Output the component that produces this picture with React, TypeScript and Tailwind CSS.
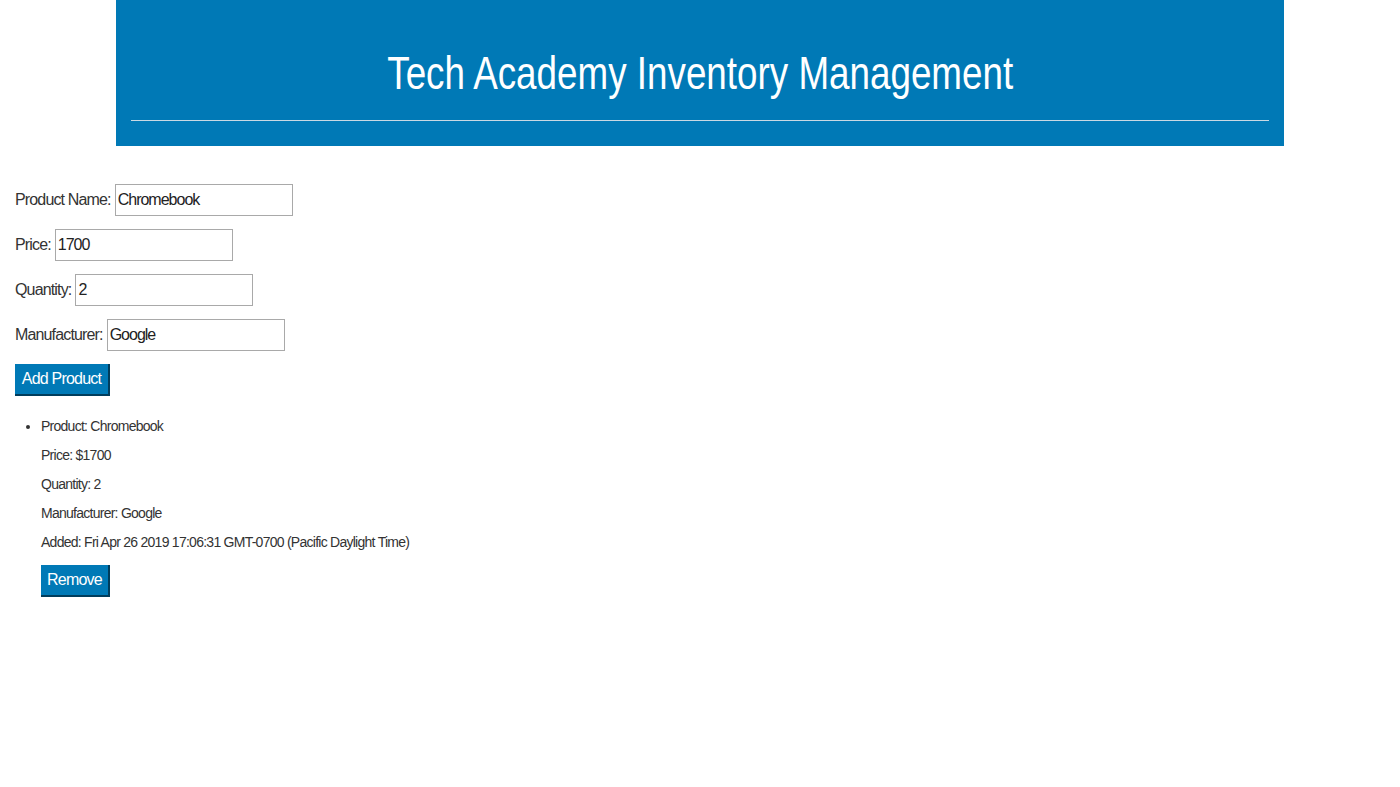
import React from 'react'

const fields = [
  { label: 'Product Name:', value: 'Chromebook' },
  { label: 'Price:', value: '1700' },
  { label: 'Quantity:', value: '2' },
  { label: 'Manufacturer:', value: 'Google' },
]

const details = [
  'Product: Chromebook',
  'Price: $1700',
  'Quantity: 2',
  'Manufacturer: Google',
  'Added: Fri Apr 26 2019 17:06:31 GMT-0700 (Pacific Daylight Time)',
]

export default function App() {
  return (
    <div className="min-h-screen bg-white font-['Liberation_Sans',Arial,sans-serif] text-[#333]">
      <header className="mx-auto w-[1168px] bg-[#0079b6] px-[15px] pt-[45px] pb-[25px]">
        <h1 className="text-center text-[46px] leading-[56px] text-white">
          <span className="inline-block scale-x-[0.8]">Tech Academy Inventory Management</span>
        </h1>
        <hr className="mt-[19px] border-t border-[#c9d9e4]" />
      </header>

      <main className="px-[15px] pt-[38px]">
        <form className="flex flex-col gap-[13px]">
          {fields.map((f) => (
            <div key={f.label} className="flex items-center gap-[4px] text-[16px] tracking-[-0.85px]">
              <label>{f.label}</label>
              <input
                defaultValue={f.value}
                className="h-[32px] w-[178px] border border-[#a9a9a9] px-[2px] text-[16px] tracking-[-1px] text-[#222] outline-none"
              />
            </div>
          ))}
          <div>
            <button
              type="button"
              className="h-[32px] w-[95px] border-b-2 border-r-2 border-[#003d5c] bg-[#0079b6] text-[16px] tracking-[-0.8px] text-white"
            >
              Add Product
            </button>
          </div>
        </form>

        <ul className="mt-[20px] list-disc pl-[26px] text-[14px] tracking-[-0.74px]">
          <li>
            <div className="flex flex-col gap-[9px] leading-[20px]">
              {details.map((d) => (
                <span key={d}>{d}</span>
              ))}
            </div>
            <button
              type="button"
              className="mt-[13px] h-[32px] w-[69px] border-b-2 border-r-2 border-[#003d5c] bg-[#0079b6] text-[16px] tracking-[-0.8px] text-white"
            >
              Remove
            </button>
          </li>
        </ul>
      </main>
    </div>
  )
}
